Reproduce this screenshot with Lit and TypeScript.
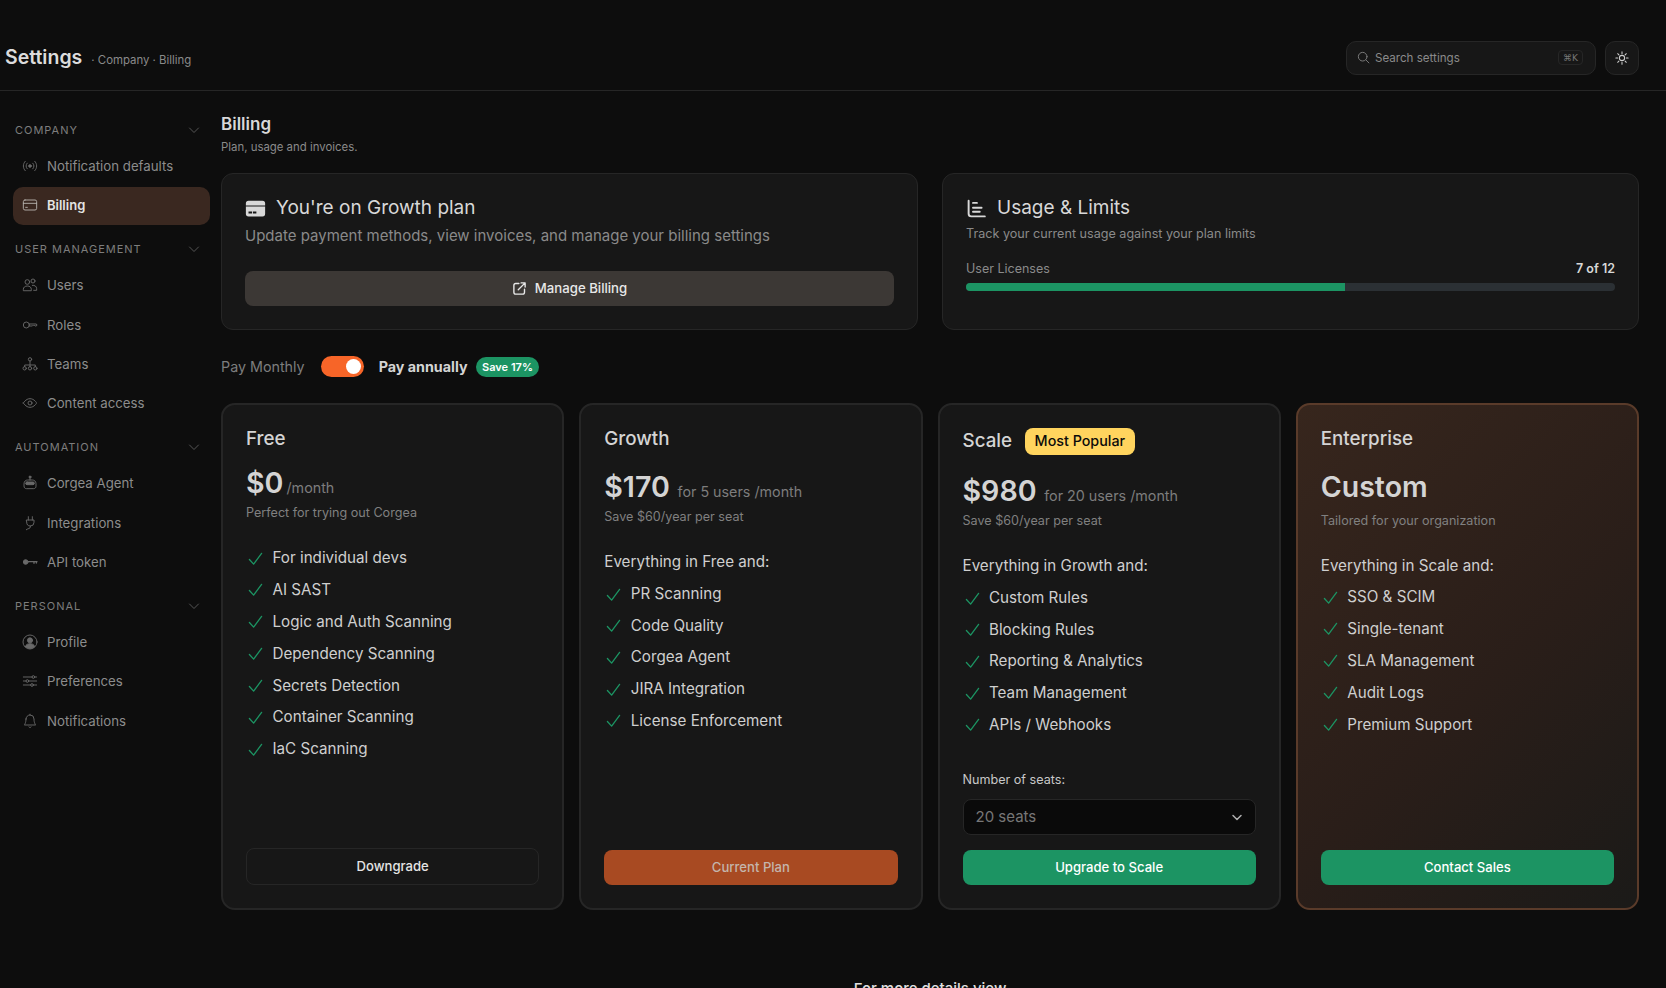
import { LitElement, html, css, svg } from "lit";
import { customElement } from "lit/decorators.js";

const ic = (body: unknown, w = 1.4) => html`<svg class="ic" viewBox="0 0 24 24" fill="none" stroke="currentColor" stroke-width=${w} stroke-linecap="round" stroke-linejoin="round">${body}</svg>`;

const icons: Record<string, unknown> = {
  radio: svg`<path d="M4.9 19.1C1 15.2 1 8.8 4.9 4.9"/><path d="M7.8 16.2c-2.3-2.3-2.3-6.1 0-8.5"/><circle cx="12" cy="12" r="2" fill="currentColor"/><path d="M16.2 7.8c2.3 2.3 2.3 6.1 0 8.5"/><path d="M19.1 4.9C23 8.8 23 15.1 19.1 19"/>`,
  card: svg`<rect x="2" y="4.5" width="20" height="15" rx="2.5"/><path d="M2 9.5h20"/><path d="M5.500 15.500h2.500"/>`,
  users: svg`<circle cx="8" cy="7.500" r="3.500"/><circle cx="16.500" cy="6" r="3"/><path d="M2 20v-1.500c0-3 2.500-5 6-5s6 2 6 5V20z"/><path d="M15.500 12.500c3.500-.5 6.500 1.500 6.500 5V20h-4.500"/>`,
  roles: svg`<circle cx="6.500" cy="12" r="4.500"/><path d="M11 10.500h10.500l1 1.500-1 1.500h-2l-1-1-1 1-1-1-1 1H11"/>`,
  teams: svg`<circle cx="12" cy="5" r="2.500"/><circle cx="4" cy="18.500" r="2.500"/><circle cx="12" cy="18.500" r="2.500"/><circle cx="20" cy="18.500" r="2.500"/><path d="M4 16v-2.500h16V16M12 7.500V16"/>`,
  eye: svg`<path d="M2 12s3.600-6.500 10-6.500S22 12 22 12s-3.600 6.500-10 6.500S2 12 2 12z"/><circle cx="12" cy="12" r="3"/>`,
  bot: svg`<circle cx="12" cy="3" r="1.500" fill="currentColor"/><path d="M12 4.500v3"/><path d="M3 13c0-3.500 2.500-5.500 5.500-5.500h7c3 0 5.500 2 5.500 5.500v4c0 2-1.500 3.500-3.500 3.500h-11C4.500 20.500 3 19 3 17z"/><rect x="5.500" y="10.500" width="13" height="4" rx="2" fill="currentColor"/>`,
  plug: svg`<path d="M9.500 2.500v5M15.500 2.500v5"/><path d="M7 7.500h11v3.500a5.500 5.500 0 0 1-11 0z"/><path d="M12.500 16.500v1.500c0 2.500-3.500 2-6 4"/>`,
  key: svg`<circle cx="5.500" cy="12" r="3.500" fill="currentColor"/><path d="M9 11.500h13.500M18 11.500v2.500M21.500 11.500v2" stroke-width="2"/>`,
  profile: svg`<circle cx="12" cy="12" r="10.500"/><circle cx="12" cy="9.500" r="3.800" fill="currentColor"/><path d="M5 19c1-3.500 3.800-4.500 7-4.500s6 1 7 4.500a10.500 10.500 0 0 1-14 0z" fill="currentColor"/>`,
  sliders: svg`<path d="M2 6h13M19 6h3M2 12h4M10 12h12M2 18h11M17 18h5"/><circle cx="17" cy="6" r="2"/><circle cx="8" cy="12" r="2"/><circle cx="15" cy="18" r="2"/>`,
  bell: svg`<path d="M6 9a6 6 0 0 1 12 0c0 6 2.500 9 2.500 9h-17S6 15 6 9z"/><path d="M10.300 21a2 2 0 0 0 3.400 0"/><path d="M12 3V1.800"/>`,
};

interface Plan {
  name: string; badge?: string; price: string; per: string; note: string; lead?: string;
  features: string[]; cta: string; ctaKind: string; seats?: boolean; ent?: boolean;
}

const plans: Plan[] = [
  { name: "Free", price: "$0", per: "/month", note: "Perfect for trying out Corgea",
    features: ["For individual devs", "AI SAST", "Logic and Auth Scanning", "Dependency Scanning", "Secrets Detection", "Container Scanning", "IaC Scanning"],
    cta: "Downgrade", ctaKind: "ghost" },
  { name: "Growth", price: "$170", per: "for 5 users /month", note: "Save $60/year per seat", lead: "Everything in Free and:",
    features: ["PR Scanning", "Code Quality", "Corgea Agent", "JIRA Integration", "License Enforcement"],
    cta: "Current Plan", ctaKind: "current" },
  { name: "Scale", badge: "Most Popular", price: "$980", per: "for 20 users /month", note: "Save $60/year per seat", lead: "Everything in Growth and:",
    features: ["Custom Rules", "Blocking Rules", "Reporting & Analytics", "Team Management", "APIs / Webhooks"],
    cta: "Upgrade to Scale", ctaKind: "green", seats: true },
  { name: "Enterprise", price: "Custom", per: "", note: "Tailored for your organization", lead: "Everything in Scale and:",
    features: ["SSO & SCIM", "Single-tenant", "SLA Management", "Audit Logs", "Premium Support"],
    cta: "Contact Sales", ctaKind: "green", ent: true },
];

const nav = [
  { label: "COMPANY", items: [["radio", "Notification defaults"], ["card", "Billing"]] },
  { label: "USER MANAGEMENT", items: [["users", "Users"], ["roles", "Roles"], ["teams", "Teams"], ["eye", "Content access"]] },
  { label: "AUTOMATION", items: [["bot", "Corgea Agent"], ["plug", "Integrations"], ["key", "API token"]] },
  { label: "PERSONAL", items: [["profile", "Profile"], ["sliders", "Preferences"], ["bell", "Notifications"]] },
];

const chevron = html`<svg class="chev" viewBox="0 0 12 12" fill="none" stroke="currentColor" stroke-width="1" stroke-linecap="round" stroke-linejoin="round"><path d="M1.500 4l4.500 4.500L10.500 4"/></svg>`;
const check = html`<svg class="check" viewBox="0 0 16 16" fill="none" stroke="currentColor" stroke-width="1.400" stroke-linecap="round" stroke-linejoin="round"><path d="M1.500 9l4.500 5L14.500 2.500"/></svg>`;

@customElement("app-root")
export class AppRoot extends LitElement {
  static styles = css`
    :host { display: block; font-family: Inter, "Liberation Sans", sans-serif; color: #d4d4d4; background: #0d0d0d; height: 988px; overflow: hidden; }
    * { box-sizing: border-box; }
    .header { height: 91px; border-bottom: 1px solid #262626; display: flex; align-items: center; padding: 24px 27px 0 5px; }
    .title { font-size: 19.500px; font-weight: 600; color: #dcdcdc; line-height: 24px; margin-top: -1px; }
    .crumb { font-size: 11.400px; color: #8a8a8a; margin-left: 9px; line-height: 20px; margin-top: 5px; }
    .spacer { flex: 1; }
    .search { width: 250px; height: 34px; margin-top: 2px; border: 1px solid #262626; border-radius: 10px; background: #171717; display: flex; align-items: center; padding: 0 12px 1px 10px; gap: 5px; font-size: 11.600px; color: #8a8a8a; }
    .search .s-ic { width: 13px; height: 13px; color: #7a7a7a; flex: none; }
    .kbd { margin-left: auto; height: 15px; border: 1px solid #262626; border-radius: 4px; font-size: 9px; padding: 0 4px; display: flex; align-items: center; color: #777; font-family: "DejaVu Sans", sans-serif; }
    .theme { width: 34px; height: 34px; margin: 2px 0 0 9px; border: 1px solid #262626; border-radius: 10px; background: #171717; display: flex; align-items: center; justify-content: center; color: #cfcfcf; }
    .theme svg { width: 14px; height: 14px; }
    .body { display: flex; }
    .side { width: 221px; flex: none; padding: 29px 11px 0 13px; }
    .sec-h { height: 20px; display: flex; align-items: center; justify-content: space-between; padding: 0 10px 0 2px; font-size: 11px; letter-spacing: 0.09em; color: #7d7d7d; margin-bottom: 7px; }
    .sec + .sec { margin-top: 15px; }
    .sec:nth-child(2) { margin-top: 14px; }
    .chev { width: 12px; height: 12px; color: #555; }
    .item { height: 38px; display: flex; align-items: center; padding: 0 9px; gap: 9px; font-size: 13.250px; color: #8c8c8c; border-radius: 10px; margin-bottom: 1.330px; }
    .item .ic { width: 16px; height: 16px; flex: none; color: #696969; }
    .item.on { background: #3a2820; color: #e4e4e4; font-weight: 600; font-size: 13px; margin-top: 2.330px; padding-bottom: 2px; }
    .item.on .ic { color: #b5b0ab; }
    .main { flex: 1; min-width: 0; padding: 22px 27px 0 0; }
    .h1 { font-size: 17px; font-weight: 600; color: #d8d8d8; line-height: 22px; }
    .h1sub { font-size: 11.400px; color: #8a8a8a; line-height: 16px; margin-top: 4px; }
    .top { display: grid; grid-template-columns: 697px 1fr; gap: 24px; margin-top: 18px; }
    .panel { height: 157px; background: #171717; border: 1px solid #262626; border-radius: 12px; padding: 22px 23px; }
    .p-title { display: flex; align-items: center; gap: 10px; font-size: 19px; font-weight: 400; color: #d8d8d8; line-height: 24px; }
    .p-title svg { width: 21px; height: 21px; flex: none; }
    .p-sub { font-size: 15px; color: #8a8a8a; line-height: 20px; margin-top: 6px; }
    .manage { height: 35px; margin-top: 25px; background: #3c3835; border-radius: 8px; display: flex; align-items: center; justify-content: center; gap: 8px; font-size: 13.200px; font-weight: 500; color: #e8e8e8; padding-bottom: 1px; }
    .manage svg { width: 15px; height: 15px; }
    .u-sub { font-size: 12.600px; color: #8a8a8a; line-height: 18px; margin-top: 5px; }
    .u-row { display: flex; justify-content: space-between; font-size: 12.500px; color: #8a8a8a; line-height: 18px; margin-top: 17px; }
    .u-row b { color: #d8d8d8; font-weight: 600; font-size: 12.500px; }
    .bar { height: 8px; border-radius: 4px; background: #2b3034; margin-top: 5px; overflow: hidden; }
    .bar i { display: block; height: 100%; background: #1c9463; }
    .toggle-row { display: flex; align-items: center; height: 21px; margin-top: 26px; font-size: 14.300px; color: #7d7d7d; }
    .switch { width: 43px; height: 21px; border-radius: 11px; background: #f76528; margin: 0 15px 0 16px; display: flex; align-items: center; justify-content: flex-end; padding-right: 3px; }
    .switch i { width: 15px; height: 15px; border-radius: 50%; background: #fff; display: block; }
    .annual { font-weight: 700; color: #d4d4d4; }
    .save { height: 20px; margin-left: 8px; padding: 0 6.500px; border-radius: 10px; background: #1c9463; color: #fff; font-size: 11px; font-weight: 600; display: flex; align-items: center; }
    .plans { display: grid; grid-template-columns: repeat(4, 1fr); gap: 15px; margin-top: 26px; }
    .plan { height: 507px; background: #171717; border: 2px solid #262626; border-radius: 14px; padding: 22px 23px 23px; display: flex; flex-direction: column; }
    .plan.ent { background: linear-gradient(135deg, #37261d 0%, #2a1e19 55%, #1b1a18 100%); border-color: #5a3b2a; }
    .name { display: flex; align-items: center; gap: 13px; font-size: 18.800px; font-weight: 500; color: #d4d4d4; line-height: 24px; height: 24px; }
    .plan.scale .name { margin-top: 2px; }
    .pop { background: #ffd45e; color: #0a0a0a; font-size: 14.300px; font-weight: 500; height: 27px; padding: 0 9.500px; border-radius: 8px; display: flex; align-items: center; }
    .price { display: flex; align-items: baseline; gap: 3px; margin-top: 17px; line-height: 29px; font-size: 28.600px; font-weight: 600; color: #d4d4d4; }
    .plan.lead .price { margin-top: 21px; gap: 7.700px; }
    .plan.scale .price { margin-top: 23px; }
    .plan.ent .price { margin-top: 21px; font-size: 28.500px; }
    .per { font-size: 14.300px; font-weight: 400; color: #7d7d7d; }
    .note { font-size: 12.600px; color: #808080; line-height: 18px; margin-top: 2px; }
    .plan.ent .note { margin-top: 11px; }
    .lead-t { font-size: 15.200px; color: #cfcfcf; line-height: 20px; margin-top: 26px; }
    .feats { list-style: none; margin: 0; padding: 0; display: flex; flex-direction: column; gap: 11.900px; margin-top: 26px; }
    .plan.lead .feats { gap: 11.700px; }
    .plan.ent .feats { gap: 11.900px; }
    .lead-t + .feats { margin-top: 12px; }
    .plan.ent .lead-t + .feats { margin-top: 11px; }
    .feats li { display: flex; align-items: center; gap: 9.500px; font-size: 15.200px; color: #cfcfcf; line-height: 20px; height: 20px; padding-left: 2px; }
    .check { width: 15px; height: 15px; color: #1c9463; flex: none; }
    .foot { margin-top: auto; }
    .seats-l { font-size: 12.600px; color: #c8c8c8; line-height: 18px; margin-bottom: 10px; }
    .select { height: 36px; border: 1px solid #262626; border-radius: 8px; background: #0a0a0a; display: flex; align-items: center; justify-content: space-between; padding: 0 12px 1px; font-size: 15px; color: #777; margin-bottom: 15px; }
    .select svg { width: 12px; height: 12px; color: #b0b0b0; }
    .btn { height: 35px; border-radius: 8px; display: flex; align-items: center; justify-content: center; font-size: 13.100px; font-weight: 500; color: #fff; padding-bottom: 1px; }
    .btn.green { background: #1c9463; }
    .btn.current { background: #a84a22; color: #c4b5ac; }
    .btn.ghost { height: 37px; border: 1px solid #262626; color: #e4e4e4; }
    .more { text-align: center; font-size: 15px; font-weight: 500; color: #e0e0e0; margin-top: 69px; line-height: 20px; }
  `;

  private plan(p: Plan) {
    const cls = ["plan", p.lead ? "lead" : "", p.seats ? "scale" : "", p.ent ? "ent" : ""].join(" ");
    return html`<div class=${cls}>
      <div class="name">${p.name}${p.badge ? html`<span class="pop">${p.badge}</span>` : ""}</div>
      <div class="price">${p.price}${p.per ? html`<span class="per">${p.per}</span>` : ""}</div>
      <div class="note">${p.note}</div>
      ${p.lead ? html`<div class="lead-t">${p.lead}</div>` : ""}
      <ul class="feats">${p.features.map((f) => html`<li>${check}${f}</li>`)}</ul>
      <div class="foot">
        ${p.seats ? html`<div class="seats-l">Number of seats:</div><div class="select">20 seats<svg viewBox="0 0 12 12" fill="none" stroke="currentColor" stroke-width="1.500" stroke-linecap="round" stroke-linejoin="round"><path d="M2 4.500l4 4 4-4"/></svg></div>` : ""}
        <div class="btn ${p.ctaKind}">${p.cta}</div>
      </div>
    </div>`;
  }

  render() {
    return html`
      <div class="header">
        <div class="title">Settings</div>
        <div class="crumb">· Company · Billing</div>
        <div class="spacer"></div>
        <div class="search">
          <svg class="s-ic" viewBox="0 0 24 24" fill="none" stroke="currentColor" stroke-width="1.800" stroke-linecap="round"><circle cx="10.500" cy="10.500" r="8"/><path d="M16.500 16.500L22 22"/></svg>
          Search settings
          <span class="kbd">⌘K</span>
        </div>
        <div class="theme"><svg viewBox="0 0 24 24" fill="none" stroke="currentColor" stroke-width="1.800" stroke-linecap="round"><circle cx="12" cy="12" r="4.500"/><path d="M12 1.500v3M12 19.500v3M1.500 12h3M19.500 12h3M4.600 4.600l2.100 2.100M17.300 17.300l2.100 2.100M4.600 19.400l2.100-2.100M17.300 6.700l2.100-2.100"/></svg></div>
      </div>
      <div class="body">
        <aside class="side">
          ${nav.map((s) => html`<div class="sec">
            <div class="sec-h">${s.label}${chevron}</div>
            ${s.items.map(([i, t]) => html`<div class="item ${t === "Billing" ? "on" : ""}">${ic(icons[i])}${t}</div>`)}
          </div>`)}
        </aside>
        <main class="main">
          <div class="h1">Billing</div>
          <div class="h1sub">Plan, usage and invoices.</div>
          <div class="top">
            <section class="panel">
              <div class="p-title">
                <svg viewBox="0 0 24 24" fill="currentColor"><path fill-rule="evenodd" d="M4 3h16a3 3 0 0 1 3 3v2.500H1V6a3 3 0 0 1 3-3zM1 9.800h22V18a3 3 0 0 1-3 3H4a3 3 0 0 1-3-3zm3 5.700v2.200h4v-2.200zm5 0v2.200h4v-2.200z"/></svg>
                You're on Growth plan
              </div>
              <div class="p-sub">Update payment methods, view invoices, and manage your billing settings</div>
              <div class="manage">
                <svg viewBox="0 0 24 24" fill="none" stroke="currentColor" stroke-width="2.200" stroke-linecap="round" stroke-linejoin="round"><path d="M11 4H6a3 3 0 0 0-3 3v11a3 3 0 0 0 3 3h11a3 3 0 0 0 3-3v-5"/><path d="M10 14L21 3M14.500 3H21v6.500"/></svg>
                Manage Billing
              </div>
            </section>
            <section class="panel">
              <div class="p-title">
                <svg viewBox="0 0 24 24" fill="none" stroke="currentColor" stroke-width="2.200" stroke-linecap="round"><path d="M3 3v15a3 3 0 0 0 3 3h15.500"/><path d="M8 5.600h4.500M8 11.200h9.800M8 15.800h7.700"/></svg>
                Usage &amp; Limits
              </div>
              <div class="u-sub">Track your current usage against your plan limits</div>
              <div class="u-row"><span>User Licenses</span><b>7 of 12</b></div>
              <div class="bar"><i style="width:${(7 / 12) * 100}%"></i></div>
            </section>
          </div>
          <div class="toggle-row">
            <span>Pay Monthly</span>
            <span class="switch"><i></i></span>
            <span class="annual">Pay annually</span>
            <span class="save">Save 17%</span>
          </div>
          <div class="plans">${plans.map((p) => this.plan(p))}</div>
          <div class="more">For more details view</div>
        </main>
      </div>
    `;
  }
}
